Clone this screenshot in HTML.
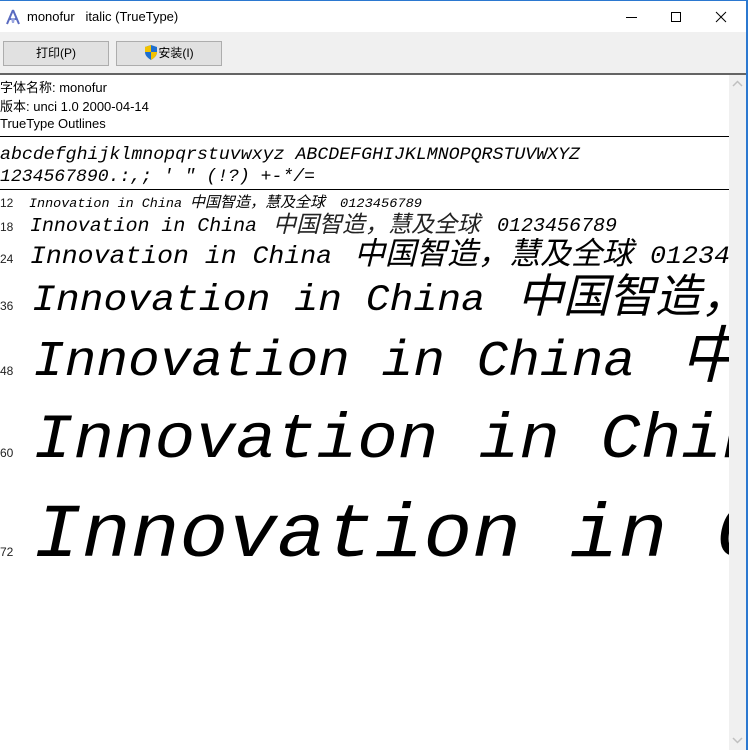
<!DOCTYPE html>
<html><head><meta charset="utf-8"><style>
*{margin:0;padding:0;box-sizing:border-box}
body{width:748px;height:750px;overflow:hidden;background:#fff;font-family:"Liberation Sans","Noto Sans CJK SC",sans-serif;position:relative}
.title{position:absolute;left:0;top:0;width:748px;height:32px;background:#fff;border-top:1px solid #2b78d0}
.title .t{position:absolute;left:27px;top:8px;font-size:13px;color:#000}
.tb{position:absolute;left:0;top:32px;width:746px;height:41px;background:#f0f0f0}
.sep{position:absolute;left:0;top:73px;width:746px;height:2px;background:#646464}
.btn{position:absolute;top:9px;height:25px;width:106px;background:#e1e1e1;border:1px solid #adadad;font-size:12px;text-align:center;line-height:23px;color:#000}
.sb{position:absolute;left:729px;top:75px;width:17px;height:675px;background:#f0f0f0}
.bl{position:absolute;left:746px;top:0;width:2px;height:750px;background:#2b78d0}
.info{position:absolute;left:0;font-size:13px;color:#000}
.hr{position:absolute;left:0;width:729px;height:1px;background:#000}
</style></head><body>
<div class="title">
<svg style="position:absolute;left:5px;top:8px" width="16" height="16" viewBox="0 0 16 16"><path d="M8 1 L2 15 M8 1 L14 15 M4 10 H12" stroke="#5a6bc0" stroke-width="2" fill="none"/><path d="M6 9 L10 9 L9 14 L7 14Z" fill="#9aa6e0"/></svg>
<span class="t">monofur &nbsp;&nbsp;italic (TrueType)</span>
<svg style="position:absolute;left:625px;top:10px" width="110" height="14"><line x1="1" y1="6.5" x2="12" y2="6.5" stroke="#000"/><rect x="46.5" y="1.5" width="9" height="9" fill="none" stroke="#000"/><path d="M91 1 L101 11 M101 1 L91 11" stroke="#000"/></svg>
</div>
<div class="tb">
<div class="btn" style="left:3px">打印(P)</div>
<div class="btn" style="left:116px"><svg style="vertical-align:-3px" width="14" height="15" viewBox="0 0 14 15"><path d="M7 0 L13 2 V7 C13 11 10 13 7 15 C4 13 1 11 1 7 V2Z" fill="#1e6fd0"/><path d="M7 0 V7 H1 V2Z M7 7 H13 C13 11 10 13 7 15Z" fill="#f2c200"/></svg>安装(I)</div>
</div>
<div class="sep"></div>
<div class="info" style="top:77px">字体名称: monofur</div>
<div class="info" style="top:96px">版本: unci 1.0 2000-04-14</div>
<div class="info" style="top:116px">TrueType Outlines</div>
<div class="hr" style="top:136px"></div>
<div class="hr" style="top:189px"></div>
<svg style="position:absolute;left:0;top:0" width="729" height="750">
<g font-family="Liberation Mono, monospace" font-style="italic" fill="#000">
<text x="0" y="159" font-size="17.5" textLength="580" lengthAdjust="spacingAndGlyphs">abcdefghijklmnopqrstuvwxyz ABCDEFGHIJKLMNOPQRSTUVWXYZ</text>
<text x="0" y="181" font-size="17.5" textLength="315" lengthAdjust="spacingAndGlyphs">1234567890.:,; ' " (!?) +-*/=</text>
</g>
<g font-family="Liberation Sans, sans-serif" font-size="12" fill="#222">
<text x="0" y="207">12</text><text x="0" y="231">18</text><text x="0" y="263">24</text><text x="0" y="310">36</text><text x="0" y="375">48</text><text x="0" y="457">60</text><text x="0" y="556">72</text>
</g>
<g font-style="italic" fill="#000">
<g font-family="Liberation Mono, monospace">
<text x="29" y="207" font-size="12.5" textLength="153" lengthAdjust="spacingAndGlyphs">Innovation in China</text>
<text x="340" y="207" font-size="12.5" textLength="82" lengthAdjust="spacingAndGlyphs">0123456789</text>
<text x="30" y="231" font-size="19" textLength="227" lengthAdjust="spacingAndGlyphs">Innovation in China</text>
<text x="497" y="231" font-size="19" textLength="120" lengthAdjust="spacingAndGlyphs">0123456789</text>
<text x="30" y="263" font-size="25" textLength="302" lengthAdjust="spacingAndGlyphs">Innovation in China</text>
<text x="650" y="263" font-size="25" textLength="160" lengthAdjust="spacingAndGlyphs">0123456789</text>
<text x="32" y="310" font-size="37" textLength="453" lengthAdjust="spacingAndGlyphs">Innovation in China</text>
<text x="33" y="375" font-size="50" textLength="602" lengthAdjust="spacingAndGlyphs">Innovation in China</text>
<text x="33" y="457" font-size="63" textLength="770" lengthAdjust="spacingAndGlyphs">Innovation in China</text>
<text x="33" y="556" font-size="76" textLength="927" lengthAdjust="spacingAndGlyphs">Innovation in China</text>
</g>
<g font-family="Noto Sans CJK SC, sans-serif">
<text x="190" y="207" font-size="15">中国智造，慧及全球</text>
<text x="273" y="232" font-size="23" fill="#222">中国智造，慧及全球</text>
<text x="354" y="264" font-size="31">中国智造，慧及全球</text>
<text x="517" y="312" font-size="46">中国智造，</text>
<text x="680" y="377" font-size="62">中</text>
</g>
</g>
</svg>
<div class="sb"><svg style="position:absolute;left:3px;top:5px" width="11" height="8"><path d="M1 6 L5.5 1.5 L10 6" stroke="#c0c0c0" stroke-width="1.5" fill="none"/></svg><svg style="position:absolute;left:3px;bottom:6px" width="11" height="8"><path d="M1 2 L5.5 6.5 L10 2" stroke="#c0c0c0" stroke-width="1.5" fill="none"/></svg></div>
<div class="bl"></div>
</body></html>
